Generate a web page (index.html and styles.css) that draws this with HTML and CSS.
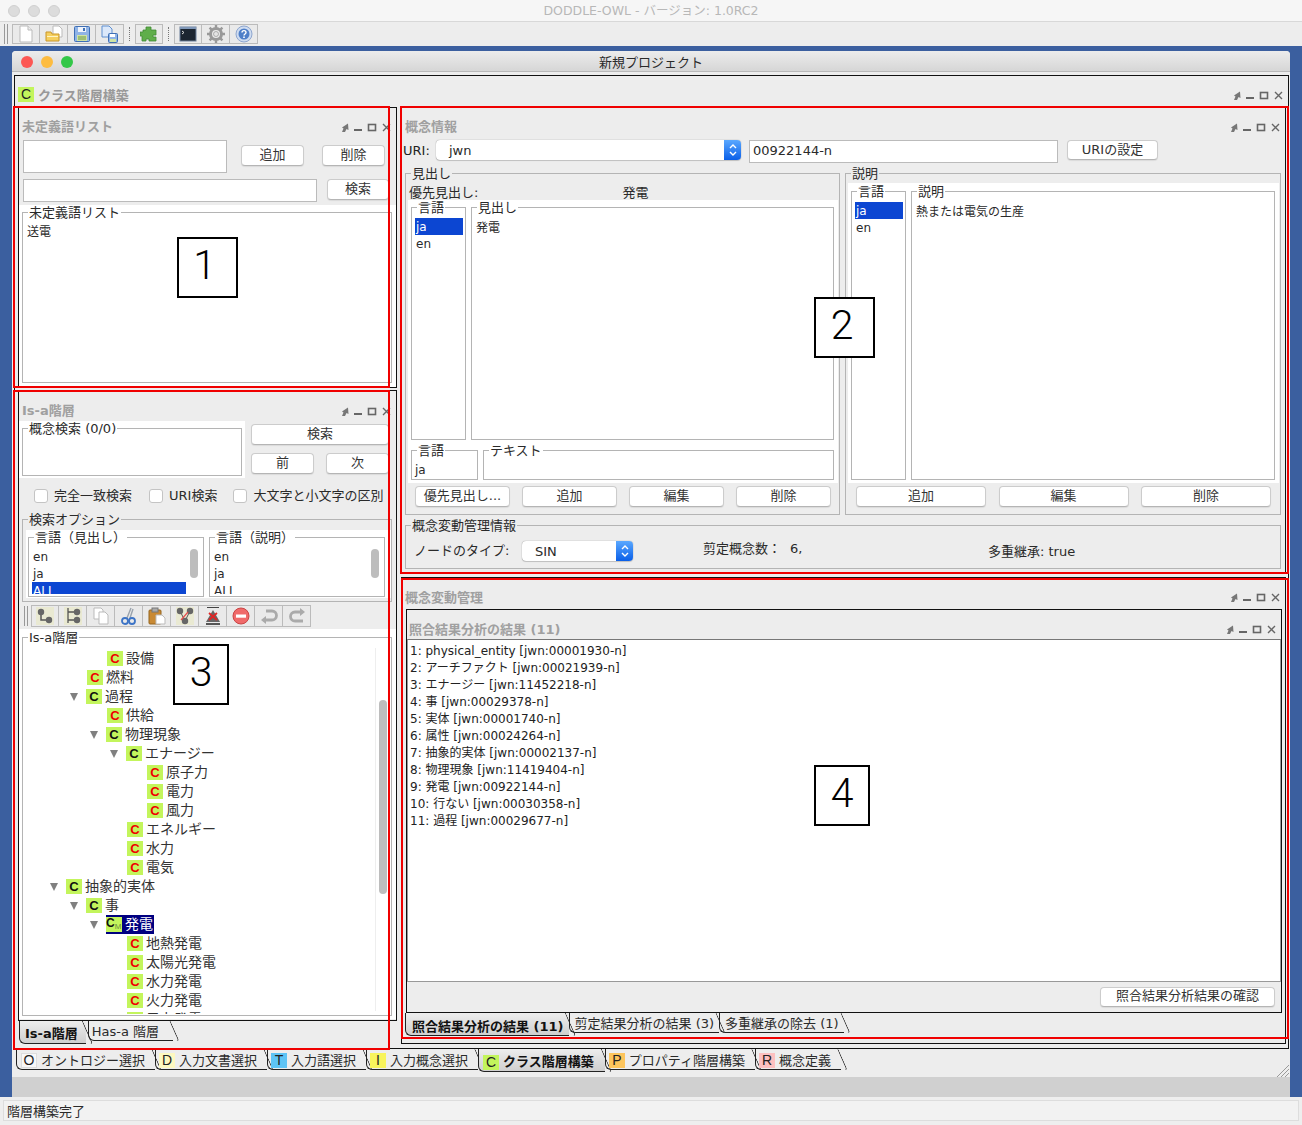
FILE: index.html
```html
<!DOCTYPE html>
<html lang="ja">
<head>
<meta charset="UTF-8">
<meta name="viewport" content="width=device-width, initial-scale=1.0">
<title>DODDLE-OWL</title>
<link rel="stylesheet" href="styles.css">
</head>
<body>
<svg class="defs" width="0" height="0">
    <symbol id="ctl" viewBox="0 0 50 10">
        <path d="M1 9l1.500-3.500-1.500-1 6-4 .5 6.500-2-1-1.500 3z" fill="#777"/>
        <rect x="13" y="6" width="8" height="2" fill="#666"/>
        <rect x="27.500" y="1.500" width="7" height="6" fill="none" stroke="#666" stroke-width="1.600"/>
        <path d="M42 1l7 7M49 1l-7 7" stroke="#666" stroke-width="1.400"/>
    </symbol>
    <symbol id="chev" viewBox="0 0 10 16">
        <path d="M2 6l3-3 3 3M2 10l3 3 3-3" fill="none" stroke="#fff" stroke-width="1.400"/>
    </symbol>
    <symbol id="i-new" viewBox="0 0 18 18">
        <path d="M3 1h8l4 4v12H3z" fill="#fff" stroke="#bbb"/><path d="M11 1v4h4" fill="#eee" stroke="#bbb"/>
    </symbol>
    <symbol id="i-open" viewBox="0 0 18 18">
        <path d="M8 1h6l3 3v8H8z" fill="#fff" stroke="#bbb"/>
        <path d="M1 7h5l1 2h7v7H1z" fill="#f5cf5e" stroke="#c9962b"/><rect x="2" y="11" width="11" height="1" fill="#fff3c4"/>
    </symbol>
    <symbol id="i-save" viewBox="0 0 18 18">
        <rect x="1.500" y="1.500" width="15" height="15" rx="1" fill="#8fb3e6" stroke="#3f6fb5"/>
        <rect x="5" y="2" width="8" height="5" fill="#eef3fb"/><rect x="10" y="3" width="2" height="3" fill="#3f6fb5"/>
        <rect x="4" y="10" width="10" height="6" fill="#cfe3a4"/><path d="M5 12h8M5 14h8" stroke="#6d9a45"/>
    </symbol>
    <symbol id="i-saveas" viewBox="0 0 18 18">
        <path d="M1 1h7l3 3v8H1z" fill="#dbe8fa" stroke="#5f8fd0"/>
        <rect x="7.500" y="8.500" width="9" height="9" rx="1" fill="#8fb3e6" stroke="#3f6fb5"/>
        <rect x="9" y="9" width="5" height="3" fill="#fff"/><rect x="9" y="14" width="6" height="3" fill="#cfe3a4"/>
    </symbol>
    <symbol id="i-plug" viewBox="0 0 18 18">
        <path d="M6 2h5v3h5v5h-3v2h3v4H9v-2H6v2H2v-5H0V7h3V5h3z" fill="#5fae4a" stroke="#3f8a33" stroke-width=".8"/>
    </symbol>
    <symbol id="i-term" viewBox="0 0 18 18">
        <rect x="1" y="2" width="16" height="14" fill="#1c2530" stroke="#6b7f99"/>
        <rect x="1" y="2" width="16" height="2" fill="#7f97b8"/><path d="M3 6l2 1.500-2 1.500" fill="none" stroke="#ddd"/>
    </symbol>
    <symbol id="i-gear" viewBox="0 0 18 18">
        <circle cx="9" cy="9" r="5.500" fill="none" stroke="#999" stroke-width="3"/>
        <path d="M9 0v3M9 15v3M0 9h3M15 9h3M2.600 2.600l2 2M13.400 13.400l2 2M2.600 15.400l2-2M13.400 4.600l2-2" stroke="#999" stroke-width="2.400"/>
        <circle cx="9" cy="9" r="2.500" fill="#e4e4e4" stroke="#888" stroke-width=".6"/>
    </symbol>
    <symbol id="i-help" viewBox="0 0 18 18">
        <circle cx="9" cy="9" r="8" fill="#cfdcf0" stroke="#8ea6cf"/><circle cx="9" cy="9" r="5.500" fill="#4f7fc8"/>
        <path d="M7 7.500c0-2.500 4-2.500 4 0 0 1.500-2 1.500-2 3" fill="none" stroke="#fff" stroke-width="1.400"/><rect x="8.200" y="11.500" width="1.600" height="1.500" fill="#fff"/>
    </symbol>
    <symbol id="t-sub" viewBox="0 0 18 18">
        <rect width="18" height="18" fill="#e9e9d2"/><path d="M5 5v8h8" fill="none" stroke="#555" stroke-width="1.500"/>
        <circle cx="5" cy="5" r="3.200" fill="#666"/><circle cx="13" cy="13" r="3.200" fill="#666"/>
    </symbol>
    <symbol id="t-sib" viewBox="0 0 18 18">
        <rect width="18" height="18" fill="#e9e9d2"/><path d="M4 1v15M4 5h7M4 13h7" fill="none" stroke="#555" stroke-width="1.300"/>
        <circle cx="13" cy="5" r="3.200" fill="#666"/><circle cx="13" cy="13" r="3.200" fill="#666"/>
    </symbol>
    <symbol id="t-copy" viewBox="0 0 18 18">
        <path d="M2 1h7l2 2v9H2z" fill="#fff" stroke="#bbb"/><path d="M7 5h6l3 3v9H7z" fill="#fff" stroke="#bbb"/>
    </symbol>
    <symbol id="t-cut" viewBox="0 0 18 18">
        <path d="M11 1L7 11M13 2l-3 9" stroke="#9aa3ad" stroke-width="1.400"/>
        <circle cx="5" cy="14" r="3" fill="none" stroke="#3d74c6" stroke-width="1.800"/><circle cx="12" cy="14" r="3" fill="none" stroke="#3d74c6" stroke-width="1.800"/>
    </symbol>
    <symbol id="t-paste" viewBox="0 0 18 18">
        <rect x="1" y="3" width="12" height="14" rx="1" fill="#c98a34" stroke="#94641f"/><rect x="4" y="1" width="6" height="4" fill="#aaa" stroke="#777"/>
        <path d="M8 8h6l3 3v6H8z" fill="#fff" stroke="#bbb"/>
    </symbol>
    <symbol id="t-del" viewBox="0 0 18 18">
        <rect width="18" height="18" fill="#e9e9d2"/><path d="M4 4l5 10M14 4L9 14" stroke="#555"/>
        <circle cx="4" cy="4" r="3.200" fill="#666"/><circle cx="14" cy="4" r="3.200" fill="#666"/><circle cx="9" cy="14" r="3.200" fill="#666"/>
        <path d="M5 13l7-8" stroke="#e54b4b" stroke-width="1.200"/>
    </symbol>
    <symbol id="t-delup" viewBox="0 0 18 18">
        <path d="M3 .5h12" stroke="#444"/><path d="M9 3l7 12H2z" fill="#666"/>
        <rect x="2" y="16" width="14" height="2" fill="#555"/><path d="M5 6l8 7M13 6l-8 7" stroke="#e02525" stroke-width="1.800"/>
    </symbol>
    <symbol id="t-stop" viewBox="0 0 18 18">
        <circle cx="9" cy="9" r="8" fill="#f06a6a" stroke="#c94545"/><rect x="4" y="7.500" width="10" height="3.200" fill="#fff"/>
    </symbol>
    <symbol id="t-undo" viewBox="0 0 18 18">
        <path d="M6 4h6a4 4 0 0 1 0 9H4" fill="none" stroke="#aaa" stroke-width="2.800"/><path d="M1 13l5-4v8z" fill="#aaa"/>
    </symbol>
    <symbol id="t-redo" viewBox="0 0 18 18">
        <path d="M12 5H7a4 4 0 0 0 0 9h8" fill="none" stroke="#aaa" stroke-width="2.800"/><path d="M17 5l-5-4v8z" fill="#aaa"/>
    </symbol>
    <symbol id="grab" viewBox="0 0 12 12">
        <path d="M0 12L12 0M4 12l8-8M8 12l4-4" stroke="#999"/>
    </symbol>
</svg>

<div class="screen">
    <div class="app-title">
        <div class="lights gray"><span></span><span></span><span></span></div>
        <div class="app-name">DODDLE-OWL - バージョン: 1.0RC2</div>
    </div>
    <div class="app-tools">
        <span class="grip"></span>
        <div class="tb-group">
            <span class="tb-btn"><svg><use href="#i-new"/></svg></span>
            <span class="tb-btn"><svg><use href="#i-open"/></svg></span>
            <span class="tb-btn"><svg><use href="#i-save"/></svg></span>
            <span class="tb-btn"><svg><use href="#i-saveas"/></svg></span>
        </div>
        <span class="dots"></span>
        <div class="tb-group">
            <span class="tb-btn"><svg><use href="#i-plug"/></svg></span>
        </div>
        <span class="dots"></span>
        <div class="tb-group">
            <span class="tb-btn"><svg><use href="#i-term"/></svg></span>
            <span class="tb-btn"><svg><use href="#i-gear"/></svg></span>
            <span class="tb-btn"><svg><use href="#i-help"/></svg></span>
        </div>
    </div>

    <div class="desktop">
        <div class="window">
            <div class="win-title">
                <div class="lights"><span class="red"></span><span class="yellow"></span><span class="green"></span></div>
                <div class="win-name">新規プロジェクト</div>
            </div>
            <div class="win-body">
                <div class="main">
                    <div class="main-head">
                        <div class="main-name"><i class="ic-tab lime">C</i>クラス階層構築</div>
                        <svg class="ctl"><use href="#ctl"/></svg>
                    </div>
                    <div class="columns">
                        <div class="col-left">
                            <section class="panel p-undef">
                                <div class="panel-head"><span>未定義語リスト</span><svg class="ctl"><use href="#ctl"/></svg></div>
                                <div class="undef-row">
                                    <div class="field undef-area"></div>
                                    <button class="btn undef-add">追加</button>
                                    <button class="btn undef-del">削除</button>
                                </div>
                                <div class="undef-search">
                                    <div class="field"></div>
                                    <button class="btn">検索</button>
                                </div>
                                <div class="white undef-list">
                                    <div class="group undef-group">
                                        <span class="legend">未定義語リスト</span>
                                        <div class="small-text">送電</div>
                                    </div>
                                </div>
                            </section>

                            <section class="panel p-isa">
                                <div class="panel-head isa-head"><span>Is-a階層</span><svg class="ctl"><use href="#ctl"/></svg></div>
                                <div class="search-row">
                                    <div class="white search-box">
                                        <div class="group search-group"><span class="legend">概念検索 (0/0)</span></div>
                                    </div>
                                    <div class="search-btns">
                                        <button class="btn">検索</button>
                                        <div class="search-nav">
                                            <button class="btn">前</button>
                                            <button class="btn">次</button>
                                        </div>
                                    </div>
                                </div>
                                <div class="checks">
                                    <label class="check"><i></i>完全一致検索</label>
                                    <label class="check"><i></i>URI検索</label>
                                    <label class="check"><i></i>大文字と小文字の区別</label>
                                </div>
                                <div class="group opt-group">
                                    <span class="legend grey">検索オプション</span>
                                    <div class="white opt-inner">
                                        <div class="group lang-group">
                                            <span class="legend">言語（見出し）</span>
                                            <div class="lang-list">
                                                <div>en</div><div>ja</div><div class="selected">ALL</div>
                                            </div>
                                            <span class="thumb"></span>
                                        </div>
                                        <div class="group lang-group">
                                            <span class="legend">言語（説明）</span>
                                            <div class="lang-list">
                                                <div>en</div><div>ja</div><div>ALL</div>
                                            </div>
                                            <span class="thumb"></span>
                                        </div>
                                    </div>
                                </div>
                                <div class="tree-tools">
                                    <span class="grip"></span>
                                    <div class="tb-group">
                                        <span class="tb-btn"><svg><use href="#t-sub"/></svg></span>
                                        <span class="tb-btn"><svg><use href="#t-sib"/></svg></span>
                                        <span class="tb-btn"><svg><use href="#t-copy"/></svg></span>
                                        <span class="tb-btn"><svg><use href="#t-cut"/></svg></span>
                                        <span class="tb-btn"><svg><use href="#t-paste"/></svg></span>
                                        <span class="tb-btn"><svg><use href="#t-del"/></svg></span>
                                        <span class="tb-btn"><svg><use href="#t-delup"/></svg></span>
                                        <span class="tb-btn"><svg><use href="#t-stop"/></svg></span>
                                        <span class="tb-btn"><svg><use href="#t-undo"/></svg></span>
                                        <span class="tb-btn"><svg><use href="#t-redo"/></svg></span>
                                    </div>
                                </div>
                                <div class="white tree-wrap">
                                    <div class="group tree-group">
                                        <span class="legend">Is-a階層</span>
                                        <div class="tree">
                                            <div class="node l2"><i class="ic leaf">C</i>設備</div>
                                            <div class="node l1"><i class="ic leaf">C</i>燃料</div>
                                            <div class="node l1 open"><i class="ic">C</i>過程</div>
                                            <div class="node l2"><i class="ic leaf">C</i>供給</div>
                                            <div class="node l2 open"><i class="ic">C</i>物理現象</div>
                                            <div class="node l3 open"><i class="ic">C</i>エナージー</div>
                                            <div class="node l4"><i class="ic leaf">C</i>原子力</div>
                                            <div class="node l4"><i class="ic leaf">C</i>電力</div>
                                            <div class="node l4"><i class="ic leaf">C</i>風力</div>
                                            <div class="node l3"><i class="ic leaf">C</i>エネルギー</div>
                                            <div class="node l3"><i class="ic leaf">C</i>水力</div>
                                            <div class="node l3"><i class="ic leaf">C</i>電気</div>
                                            <div class="node l0 open"><i class="ic">C</i>抽象的実体</div>
                                            <div class="node l1 open"><i class="ic">C</i>事</div>
                                            <div class="node l2 open"><span class="sel"><i class="ic ic-m">C<sub>M</sub></i>発電</span></div>
                                            <div class="node l3"><i class="ic leaf">C</i>地熱発電</div>
                                            <div class="node l3"><i class="ic leaf">C</i>太陽光発電</div>
                                            <div class="node l3"><i class="ic leaf">C</i>水力発電</div>
                                            <div class="node l3"><i class="ic leaf">C</i>火力発電</div>
                                            <div class="node l3"><i class="ic leaf">C</i>風力発電</div>
                                        </div>
                                        <div class="tree-scroll"><span></span></div>
                                    </div>
                                </div>
                            </section>

                            <div class="tabs">
                                <span class="tab tab-on">Is-a階層</span>
                                <span class="tab">Has-a 階層</span>
                            </div>
                        </div>

                        <div class="col-right">
                            <section class="panel p-info">
                                <div class="panel-head"><span>概念情報</span><svg class="ctl"><use href="#ctl"/></svg></div>
                                <div class="uri-row">
                                    <span class="uri-label">URI:</span>
                                    <div class="combo uri-combo"><span>jwn</span><b><svg><use href="#chev"/></svg></b></div>
                                    <div class="field uri-field">00922144-n</div>
                                    <button class="btn uri-btn">URIの設定</button>
                                </div>
                                <div class="info-groups">
                                    <div class="group head-group">
                                        <span class="legend grey">見出し</span>
                                        <div class="pref-row"><span>優先見出し:</span><span class="pref-val">発電</span></div>
                                        <div class="white head-inner">
                                            <div class="head-lists">
                                                <div class="group lang-col">
                                                    <span class="legend">言語</span>
                                                    <div class="lang-pick"><div class="selected">ja</div><div>en</div></div>
                                                </div>
                                                <div class="group text-col">
                                                    <span class="legend">見出し</span>
                                                    <div class="small-text">発電</div>
                                                </div>
                                            </div>
                                            <div class="head-edit">
                                                <div class="group edit-lang"><span class="legend">言語</span><div class="edit-val">ja</div></div>
                                                <div class="group edit-text"><span class="legend">テキスト</span></div>
                                            </div>
                                        </div>
                                        <div class="btn-row head-btns">
                                            <button class="btn">優先見出し...</button>
                                            <button class="btn">追加</button>
                                            <button class="btn">編集</button>
                                            <button class="btn">削除</button>
                                        </div>
                                    </div>
                                    <div class="group desc-group">
                                        <span class="legend grey">説明</span>
                                        <div class="white desc-inner">
                                            <div class="group lang-col desc-lang">
                                                <span class="legend">言語</span>
                                                <div class="lang-pick"><div class="selected">ja</div><div>en</div></div>
                                            </div>
                                            <div class="group desc-text">
                                                <span class="legend">説明</span>
                                                <div class="small-text">熱または電気の生産</div>
                                            </div>
                                        </div>
                                        <div class="btn-row desc-btns">
                                            <button class="btn">追加</button>
                                            <button class="btn">編集</button>
                                            <button class="btn">削除</button>
                                        </div>
                                    </div>
                                </div>
                                <div class="group evo-group">
                                    <span class="legend grey">概念変動管理情報</span>
                                    <span class="evo-label">ノードのタイプ:</span>
                                    <div class="combo evo-combo"><span>SIN</span><b><svg><use href="#chev"/></svg></b></div>
                                    <span class="evo-count">剪定概念数：<span class="evo-num">6,</span></span>
                                    <span class="evo-multi">多重継承: true</span>
                                </div>
                            </section>

                            <section class="panel p-evo">
                                <div class="panel-head"><span>概念変動管理</span><svg class="ctl"><use href="#ctl"/></svg></div>
                                <div class="result-frame">
                                    <div class="panel-head result-head"><span>照合結果分析の結果 (11)</span><svg class="ctl"><use href="#ctl"/></svg></div>
                                    <div class="result-list">
                                        <div>1: physical_entity [jwn:00001930-n]</div>
                                        <div>2: アーチファクト [jwn:00021939-n]</div>
                                        <div>3: エナージー [jwn:11452218-n]</div>
                                        <div>4: 事 [jwn:00029378-n]</div>
                                        <div>5: 実体 [jwn:00001740-n]</div>
                                        <div>6: 属性 [jwn:00024264-n]</div>
                                        <div>7: 抽象的実体 [jwn:00002137-n]</div>
                                        <div>8: 物理現象 [jwn:11419404-n]</div>
                                        <div>9: 発電 [jwn:00922144-n]</div>
                                        <div>10: 行ない [jwn:00030358-n]</div>
                                        <div>11: 過程 [jwn:00029677-n]</div>
                                    </div>
                                    <div class="result-foot"><button class="btn">照合結果分析結果の確認</button></div>
                                </div>
                                <div class="tabs result-tabs">
                                    <span class="tab tab-on">照合結果分析の結果 (11)</span>
                                    <span class="tab">剪定結果分析の結果 (3)</span>
                                    <span class="tab">多重継承の除去 (1)</span>
                                </div>
                            </section>
                        </div>
                    </div>
                </div>

                <div class="tabs page-tabs">
                    <span class="tab"><i class="ic-tab white-ic">O</i>オントロジー選択</span>
                    <span class="tab"><i class="ic-tab cream">D</i>入力文書選択</span>
                    <span class="tab"><i class="ic-tab sky">T</i>入力語選択</span>
                    <span class="tab"><i class="ic-tab yellow">I</i>入力概念選択</span>
                    <span class="tab tab-on"><i class="ic-tab lime">C</i>クラス階層構築</span>
                    <span class="tab"><i class="ic-tab orange">P</i>プロパティ階層構築</span>
                    <span class="tab"><i class="ic-tab pink">R</i>概念定義</span>
                    <svg class="grabber"><use href="#grab"/></svg>
                </div>
                <div class="resize-strip"></div>
                <div class="grey-band"></div>
            </div>
        </div>
    </div>

    <div class="status"><div class="status-field">階層構築完了</div></div>

    <!-- annotations drawn over the shot -->
    <div class="mark m1"></div>
    <div class="mark m2"></div>
    <div class="mark m3"></div>
    <div class="mark m4"></div>
    <div class="num n1">1</div>
    <div class="num n2">2</div>
    <div class="num n3">3</div>
    <div class="num n4">4</div>
</div>
</body>
</html>
```

FILE: styles.css
```css
* {
    box-sizing: border-box;
}

body {
    margin: 0;
    font-family: "DejaVu Sans", "Noto Sans CJK JP", sans-serif;
    font-size: 13px;
    line-height: 16px;
    color: #2a2a2a;
}

.defs {
    position: absolute;
}

.screen {
    position: relative;
    width: 1302px;
    height: 1125px;
    overflow: hidden;
    display: flex;
    flex-direction: column;
    background-color: #3b5f9f;
}

/* app title and toolbar */
.app-title {
    height: 22px;
    flex: none;
    display: flex;
    align-items: center;
    justify-content: center;
    position: relative;
    background-color: #f6f6f6;
    border-bottom: 1px solid #d8d8d8;
}

.app-name {
    padding-top: 1px;
    color: #b8b8b8;
    font-size: 12.5px;
}

.lights {
    display: flex;
    gap: 8px;
    position: absolute;
    left: 8px;
    top: 5px;
}

.win-title .lights {
    left: 9px;
}

.lights span {
    width: 12px;
    height: 12px;
    border-radius: 50%;
}

.lights.gray span {
    background-color: #dcdcdc;
    border: 1px solid #d0d0d0;
}

.lights .red { background-color: #fc5753; }
.lights .yellow { background-color: #fdbc40; }
.lights .green { background-color: #33c748; }

.app-tools {
    height: 24px;
    flex: none;
    display: flex;
    align-items: center;
    padding-left: 4px;
    background-color: #ededed;
}

.grip {
    width: 4px;
    height: 20px;
    margin-right: 4px;
    border-left: 1px solid #999;
    border-right: 1px solid #999;
}

.tb-group {
    display: flex;
    border: 1px solid #bbb;
    height: 20px;
}

.tb-btn {
    width: 28px;
    height: 18px;
    display: flex;
    align-items: center;
    justify-content: center;
    border-right: 1px solid #bbb;
    background-color: #eaeaea;
}

.tb-btn:first-child {
    width: 27px;
}

.tb-btn:last-child {
    width: 27px;
    border-right: none;
}

.tb-btn:only-child {
    width: 26px;
}

.tb-btn svg {
    width: 18px;
    height: 18px;
}

.dots {
    width: 1px;
    height: 14px;
    margin: 0 5px;
    border-left: 1px dotted #777;
}

/* window */
.desktop {
    flex: 1;
    padding: 5px 12px 0;
    display: flex;
}

.window {
    flex: 1;
    display: flex;
    flex-direction: column;
    border-radius: 4px 4px 0 0;
    background-color: #ededed;
}

.win-title {
    height: 21px;
    flex: none;
    position: relative;
    text-align: center;
    line-height: 23px;
    background: linear-gradient(#ececec, #d6d6d6);
    border-bottom: 1px solid #b8b8b8;
    border-radius: 4px 4px 0 0;
}

.win-body {
    flex: 1;
    display: flex;
    flex-direction: column;
    padding: 3px 1px 0 2px;
}

.main {
    height: 974px;
    flex: none;
    border: 1px solid #111;
}

.main-head {
    height: 31px;
    display: flex;
    justify-content: space-between;
    padding: 12px 5px 0 3px;
}

.main-name {
    display: flex;
    align-items: center;
    gap: 4px;
    height: 16px;
    color: #999;
    font-weight: bold;
}

.main-name .ic-tab {
    margin-top: -4px;
}

.ctl {
    width: 50px;
    height: 10px;
    flex: none;
}

.main-head .ctl {
    margin-top: 3px;
}

.ic-tab {
    width: 16px;
    height: 15px;
    flex: none;
    font-family: "Liberation Sans", sans-serif;
    font-style: normal;
    font-weight: normal;
    text-align: center;
    font-size: 14px;
    line-height: 15px;
    color: #222;
}

.lime { background-color: #c3f55c; }
.white-ic { background-color: #f8f8f8; border: 1px solid #ddd; line-height: 13px; }
.cream { background-color: #fdf8c0; }
.sky { background-color: #5ec4f5; }
.yellow { background-color: #f8f45c; }
.orange { background-color: #fdc55c; }
.pink { background-color: #fcc0c0; }

.columns {
    display: flex;
    gap: 4px;
    padding-left: 3px;
}

.col-left {
    width: 379px;
    flex: none;
}

.col-right {
    width: 885px;
    flex: none;
}

/* panels */
.panel {
    border: 1px solid #111;
    background-color: #ededed;
}

.panel-head {
    height: 32px;
    display: flex;
    justify-content: space-between;
    padding: 11px 5px 0 3px;
    color: #a0a0a0;
    font-weight: bold;
}

.panel-head .ctl {
    margin-top: 4px;
}

.white {
    background-color: #fff;
}

.field {
    background-color: #fff;
    border: 1px solid #bbb;
}

.btn {
    height: 21px;
    padding: 0 0 2px;
    font: inherit;
    color: #333;
    background-color: #fff;
    border: 1px solid #ccc;
    border-bottom-color: #b5b5b5;
    border-radius: 4px;
    box-shadow: 0 1px 1px rgba(0, 0, 0, 0.08);
}

.group {
    position: relative;
    border: 1px solid #b4b4b4;
}

.legend {
    position: absolute;
    left: 5px;
    top: -8px;
    padding: 0 1px;
    background-color: #fff;
    white-space: nowrap;
}

.legend.grey {
    background-color: #ededed;
}

.small-text {
    font-size: 12px;
    padding: 12px 0 0 4px;
}

/* undefined terms */
.p-undef {
    height: 281px;
    margin-bottom: 2px;
}

.undef-row {
    display: flex;
    height: 33px;
    padding-left: 4px;
}

.undef-area {
    width: 204px;
    height: 33px;
}

.undef-row .btn {
    width: 63px;
    margin-top: 5px;
}

.undef-add {
    margin-left: 14px;
}

.undef-del {
    margin-left: 18px;
}

.undef-search {
    display: flex;
    gap: 10px;
    margin-top: 6px;
    padding-left: 4px;
}

.undef-search .field {
    width: 294px;
    height: 23px;
}

.undef-search .btn {
    width: 62px;
}

.undef-list {
    margin-top: 3px;
    height: 182px;
    padding: 7px 4px 0 3px;
}

.undef-group {
    height: 171px;
}

.undef-group .small-text {
    padding-top: 11px;
}

/* is-a search */
.p-isa {
    height: 631px;
}

.panel-head.isa-head {
    height: 30px;
    padding-top: 12px;
}

.isa-head .ctl {
    margin-top: 4px;
}

.search-row {
    display: flex;
    height: 57px;
}

.search-box {
    width: 226px;
    padding: 7px 3px 2px;
}

.search-group {
    height: 48px;
}

.search-btns {
    width: 138px;
    margin-left: 6px;
    padding-top: 3px;
}

.search-btns > .btn {
    width: 100%;
}

.search-nav {
    display: flex;
    justify-content: space-between;
    margin-top: 8px;
}

.search-nav .btn {
    width: 63px;
}

.checks {
    display: flex;
    height: 41px;
    padding: 9px 0 0 15px;
    gap: 17px;
}

.check {
    display: flex;
    align-items: center;
    gap: 6px;
    height: 18px;
    white-space: nowrap;
}

.check:last-child {
    margin-left: -1px;
}

.check i {
    width: 14px;
    height: 14px;
    background-color: #fff;
    border: 1px solid #c4c4c4;
    border-radius: 3px;
}

.opt-group {
    margin-left: 3px;
    width: 370px;
    height: 83px;
    padding: 10px 0 3px 3px;
}

.opt-inner {
    display: flex;
    gap: 5px;
    height: 68px;
    padding: 7px 6px 0 2px;
}

.lang-group {
    position: relative;
    flex: 1;
    height: 60px;
}

.lang-list {
    height: 46px;
    margin: 10px 0 0 3px;
    overflow: hidden;
    font-size: 12px;
}

.lang-list div {
    height: 17px;
    line-height: 19px;
    padding-left: 1px;
    width: 154px;
}

.selected {
    background-color: #0c46d2;
    color: #fff;
}

.thumb {
    position: absolute;
    right: 5px;
    top: 11px;
    width: 8px;
    height: 29px;
    border-radius: 4px;
    background-color: #bdbdbd;
}

.tree-tools {
    display: flex;
    align-items: center;
    height: 24px;
    margin-top: 2px;
    padding-left: 5px;
}

.tree-tools .grip {
    margin-right: 3px;
}

.tree-tools .tb-group {
    height: 22px;
}

.tree-tools .tb-btn {
    height: 20px;
}

.tree-wrap {
    height: 390px;
    margin-top: 1px;
    padding: 8px 4px 3px 3px;
}

.tree-group {
    height: 379px;
}

.tree {
    height: 376px;
    padding-top: 11px;
    overflow: hidden;
    font-size: 14px;
}

.node {
    display: flex;
    align-items: center;
    height: 19px;
    line-height: 19px;
    color: #333;
    white-space: nowrap;
}

.node.l0 { padding-left: 44px; }
.node.l1 { padding-left: 64px; }
.node.l2 { padding-left: 84px; }
.node.l3 { padding-left: 104px; }
.node.l4 { padding-left: 124px; }

.node.open::before {
    content: "";
    width: 0;
    height: 0;
    margin: 0 8px 0 -17px;
    border-style: solid;
    border-width: 8px 4.5px 0;
    border-color: #808080 transparent transparent;
}

.ic {
    width: 16px;
    height: 15px;
    flex: none;
    margin-right: 3px;
    text-align: center;
    background-color: #c3f55c;
    font-family: "Liberation Sans", sans-serif;
    font-style: normal;
    font-weight: bold;
    font-size: 13px;
    line-height: 15px;
    color: #111;
}

.ic.leaf {
    color: #f00000;
}

.ic-m {
    display: flex;
    align-items: flex-start;
    font-size: 12px;
    line-height: 13px;
    white-space: nowrap;
}

.ic-m sub {
    margin-top: 5px;
    font-size: 8px;
    font-weight: normal;
    line-height: 9px;
    color: #6f8f3f;
    vertical-align: baseline;
}

.sel {
    display: flex;
    align-items: center;
    height: 19px;
    padding-right: 1px;
    color: #fff;
    background-color: #000080;
}

.tree-scroll {
    position: absolute;
    right: 1px;
    top: 10px;
    bottom: 4px;
    width: 15px;
    border-left: 1px solid #eee;
}

.tree-scroll span {
    position: absolute;
    left: 3px;
    top: 52px;
    width: 8px;
    height: 194px;
    border-radius: 4px;
    background-color: #bdbdbd;
}

/* tabs */
.tabs {
    display: flex;
    align-items: flex-start;
}

.tab {
    position: relative;
    display: flex;
    align-items: center;
    gap: 4px;
    height: 20px;
    padding: 2px 10px 0 3px;
    white-space: nowrap;
    border-bottom: 1px solid #222;
    border-left: 1px solid #222;
    border-radius: 0 0 0 6px;
}

.tab::after {
    content: "";
    position: absolute;
    right: -2px;
    top: 0;
    bottom: -1px;
    width: 8px;
    border-right: 1px solid #222;
    border-bottom-right-radius: 3px;
    transform: skewX(24deg);
}

.tab-on {
    height: 23px;
    padding-top: 4px;
    font-weight: bold;
    color: #111;
    background: linear-gradient(#ededed, #cfcfcf);
}

.col-left > .tabs {
    height: 25px;
    padding-left: 1px;
}

.col-left .tab {
    padding: 3px 8px 0 5px;
}

.col-left .tab:not(.tab-on) {
    margin-left: 2px;
    padding: 2px 14px 0 3px;
}

.page-tabs {
    height: 23px;
    flex: none;
    padding-left: 2px;
}

.page-tabs .tab:not(.tab-on) {
    height: 21px;
    padding-top: 3px;
}

.page-tabs .tab-on {
    padding-left: 4px;
    padding-right: 11px;
}

.page-tabs .tab:first-child {
    padding-left: 4px;
}

.grabber {
    width: 12px;
    height: 12px;
    margin: 16px 0 0 auto;
    flex: none;
}

/* concept info */
.p-info {
    height: 466px;
    margin-bottom: 4px;
}

.uri-row {
    display: flex;
    height: 23px;
    padding-left: 1px;
}

.uri-label {
    width: 33px;
    line-height: 21px;
    color: #222;
}

.combo {
    display: flex;
    align-items: center;
    justify-content: space-between;
    height: 20px;
    background-color: #fff;
    border-radius: 4px;
    box-shadow: 0 0 1px rgba(0, 0, 0, 0.5), 0 1px 1px rgba(0, 0, 0, 0.15);
    font-size: 13px;
}

.combo span {
    padding-top: 1px;
}

.combo b {
    display: flex;
    align-items: center;
    justify-content: center;
    width: 17px;
    height: 20px;
    border-radius: 0 4px 4px 0;
    background: linear-gradient(#5aa8ff, #0a5fe8);
}

.combo svg {
    width: 10px;
    height: 16px;
}

.uri-combo {
    width: 305px;
    padding-left: 13px;
}

.uri-field {
    width: 309px;
    height: 23px;
    margin-left: 8px;
    padding-left: 3px;
    line-height: 20px;
}

.uri-btn {
    width: 91px;
    height: 20px;
    margin-left: 9px;
    padding: 0;
}

.info-groups {
    display: flex;
    gap: 5px;
    margin: 10px 0 0 3px;
    height: 342px;
}

.head-group {
    width: 435px;
    padding: 10px 1px 0 2px;
}

.pref-row {
    display: flex;
    height: 16px;
    padding-left: 1px;
    line-height: 18px;
}

.pref-val {
    margin-left: 144px;
}

.head-inner {
    width: 430px;
    height: 283px;
    padding: 7px 4px 0 3px;
}

.head-lists {
    display: flex;
    gap: 5px;
}

.lang-col {
    width: 55px;
    height: 233px;
}

.lang-pick {
    margin: 10px 2px 0 3px;
    font-size: 12px;
    line-height: 19px;
}

.lang-pick div {
    height: 17px;
    padding-left: 1px;
}

.lang-pick div + div {
    height: 16px;
}

.text-col {
    flex: 1;
    height: 233px;
}

.head-edit {
    display: flex;
    gap: 5px;
    margin-top: 10px;
}

.edit-lang {
    width: 67px;
    height: 30px;
}

.edit-val {
    font-size: 12px;
    padding: 11px 0 0 3px;
}

.edit-text {
    flex: 1;
    height: 30px;
}

.btn-row {
    display: flex;
    justify-content: space-between;
    margin-top: 3px;
}

.head-btns {
    padding: 0 7px;
}

.head-btns .btn {
    width: 95px;
}

.desc-group {
    width: 436px;
    padding: 9px 1px 0 2px;
}

.desc-inner {
    display: flex;
    gap: 5px;
    height: 300px;
    padding: 8px 4px 0 3px;
}

.desc-lang {
    height: 289px;
}

.desc-text {
    flex: 1;
    height: 289px;
}

.desc-btns {
    padding: 0 8px;
}

.desc-btns .btn {
    width: 130px;
}

.evo-group {
    margin: 10px 0 0 3px;
    width: 876px;
    height: 44px;
    display: flex;
    align-items: flex-start;
}

.evo-label {
    margin: 17px 0 0 8px;
    width: 108px;
    white-space: nowrap;
}

.evo-combo {
    width: 111px;
    margin-top: 15px;
    padding-left: 13px;
}

.evo-count {
    margin: 15px 0 0 70px;
    width: 285px;
    white-space: nowrap;
}

.evo-num {
    margin-left: 9px;
}

.evo-multi {
    margin-top: 18px;
}

/* concept drift */
.p-evo {
    height: 467px;
}

.p-evo > .panel-head {
    height: 31px;
    padding-top: 12px;
}

.p-evo > .panel-head .ctl {
    margin-top: 3px;
}

.result-frame {
    width: 876px;
    height: 404px;
    margin-left: 4px;
    border: 1px solid #111;
}

.result-frame .result-head {
    height: 29px;
    padding: 12px 5px 0 2px;
}

.result-head .ctl {
    margin-top: 3px;
}

.result-list {
    height: 343px;
    padding: 3px 2px 1px;
    background-color: #fff;
    border: 1px solid #999;
    border-top-color: #777;
    font-size: 12px;
    line-height: 17px;
    color: #222;
}

.result-foot {
    display: flex;
    justify-content: flex-end;
    padding: 5px 6px 0 0;
}

.result-foot .btn {
    width: 175px;
    height: 20px;
}

.result-tabs {
    padding-left: 3px;
}

.result-tabs .tab {
    padding: 2px 5px 0 5px;
}

.result-tabs .tab-on {
    padding: 5px 5px 0 6px;
}

/* bottom */
.resize-strip {
    height: 5px;
    flex: none;
}

.grey-band {
    flex: 1;
    margin: 0 -1px 0 -2px;
    background-color: #d0d0d0;
}

.status {
    height: 28px;
    flex: none;
    padding: 3px 3px 0;
    background-color: #eee;
}

.status-field {
    height: 21px;
    padding-left: 3px;
    line-height: 21px;
    background-color: #f2f2f2;
    border: 1px solid #ddd;
}

/* annotations */
.mark {
    position: absolute;
    border: 2px solid #f00000;
}

.m1 { left: 13px; top: 106px; width: 377px; height: 282px; }
.m2 { left: 400px; top: 106px; width: 889px; height: 468px; }
.m3 { left: 13px; top: 390px; width: 377px; height: 660px; }
.m4 { left: 401px; top: 578px; width: 888px; height: 461px; }

.num {
    position: absolute;
    display: flex;
    align-items: center;
    justify-content: center;
    padding-bottom: 6px;
    background-color: #fff;
    border: 2px solid #000;
    font-family: Roboto, "Liberation Sans", sans-serif;
    font-weight: 300;
    font-size: 41px;
    color: #000;
}

.n1 { left: 177px; top: 237px; width: 61px; height: 61px; padding-right: 6px; }
.n2 { left: 814px; top: 297px; width: 61px; height: 61px; padding-right: 5px; }
.n3 { left: 173px; top: 644px; width: 56px; height: 61px; }
.n4 { left: 814px; top: 765px; width: 56px; height: 61px; }
```
